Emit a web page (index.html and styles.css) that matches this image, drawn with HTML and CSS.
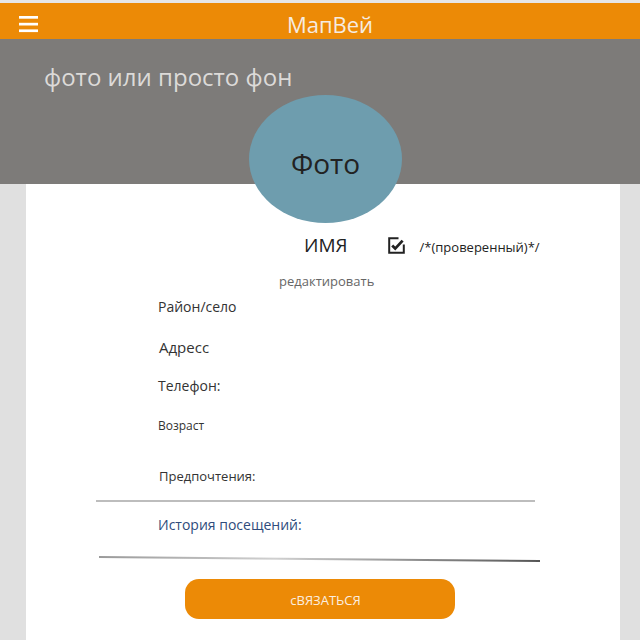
FILE: index.html
```html
<!DOCTYPE html>
<html lang="ru">
<head>
<meta charset="utf-8">
<title>МапВей</title>
<link rel="stylesheet" href="styles.css">
</head>
<body>
<div class="topstrip"></div>
<header class="header">
  <div class="menu">
    <svg width="19" height="17" viewBox="0 0 19 17">
      <rect x="0" y="0" width="19" height="2.7" fill="#fff"/>
      <rect x="0" y="6.8" width="19" height="2.7" fill="#fff"/>
      <rect x="0" y="13.4" width="19" height="2.7" fill="#fff"/>
    </svg>
  </div>
  <div class="title">МапВей</div>
  <div></div>
</header>
<section class="banner">фото или просто фон</section>
<main class="card">
  <div class="photo">Фото</div>
  <div class="name-row">
    <span class="name">ИМЯ</span>
    <svg class="check" width="17" height="17" viewBox="0 0 17 17">
      <path d="M10.5 1.2 H1.2 V15.8 H15.8 V7.5" fill="none" stroke="#222" stroke-width="2"/>
      <path d="M4.2 8.6 L7.2 11.6 L14.6 3.6" fill="none" stroke="#222" stroke-width="2.8"/>
    </svg>
    <span class="verified">/*(проверенный)*/</span>
  </div>
  <div class="edit">редактировать</div>
  <div class="field f-district">Район/село</div>
  <div class="field f-address">Адресс</div>
  <div class="field f-phone">Телефон:</div>
  <div class="field f-age">Возраст</div>
  <div class="field f-pref">Предпочтения:</div>
  <div class="rule rule-1"></div>
  <div class="field f-history">История посещений:</div>
  <div class="rule rule-2"></div>
  <button class="contact">сВЯЗАТЬСЯ</button>
</main>
</body>
</html>
```
FILE: styles.css
```css
* { box-sizing: border-box; }
html, body { margin: 0; padding: 0; }
body {
  background: #e0e0e0;
  font-family: "Open Sans", "Noto Sans", sans-serif;
  color: #333;
}
.topstrip { height: 3px; background: #e6e6e6; }
.header {
  height: 36px;
  background: #ec8a06;
  display: grid;
  grid-template-columns: 1fr auto 1fr;
}
.menu { padding: 13px 0 0 19px; }
.menu svg { display: block; }
.title {
  color: #f6ece1;
  font-size: 22px;
  line-height: 30px;
  padding-top: 6px;
  padding-left: 20px;
}
.banner {
  height: 145px;
  background: #7d7b79;
  color: #dcdad8;
  font-size: 24px;
  line-height: 30px;
  padding: 23px 0 0 44px;
}
.card {
  margin: 0 20px 0 26px;
  background: #fff;
  min-height: 470px;
  padding-bottom: 40px;
  display: flex;
  flex-direction: column;
  align-items: flex-start;
}
.photo {
  margin: -89px 0 0 223px;
  width: 153px;
  height: 128px;
  border-radius: 50%;
  background: #6e9dae;
  color: #222;
  font-size: 28px;
  display: flex;
  align-items: center;
  justify-content: center;
  padding-top: 8px;
}
.name-row {
  margin: 9px 0 0 278px;
  display: flex;
  align-items: baseline;
  line-height: 26px;
}
.name { font-size: 19px; color: #222; }
.check { margin-left: 40px; align-self: center; position: relative; top: -1px; }
.verified { margin-left: 15px; font-size: 13px; color: #222; }
.edit {
  margin: 11px 0 0 253px;
  font-size: 13px;
  line-height: 20px;
  color: #666;
}
.field { line-height: 20px; margin-left: 132px; color: #333; }
.f-district { font-size: 14px; margin-top: 6px; }
.f-address { font-size: 15px; margin-top: 20px; margin-left: 133px; }
.f-phone { font-size: 14px; margin-top: 19px; }
.f-age { font-size: 12px; margin-top: 20px; }
.f-pref { font-size: 13px; margin-top: 30px; margin-left: 133px; }
.f-history { font-size: 14px; margin-top: 13px; color: #2f4c7c; }
.rule { height: 2px; }
.rule-1 {
  margin: 14px 0 0 70px;
  width: 439px;
  background: #bdbdbd;
}
.rule-2 {
  margin: 23px 0 0 73px;
  width: 441px;
  height: 1.5px;
  background: linear-gradient(to right, #9a9a9a, #d0d0d0 40%, #555);
  transform: rotate(0.5deg);
}
.contact {
  margin: 19px 0 0 159px;
  width: 270px;
  height: 40px;
  border: none;
  border-radius: 14px;
  background: #ec8a06;
  color: #fbeee0;
  font-family: "Open Sans", "Noto Sans", sans-serif;
  font-size: 13px;
  line-height: 37px;
  padding: 3px 0 0 11px;
}
```
